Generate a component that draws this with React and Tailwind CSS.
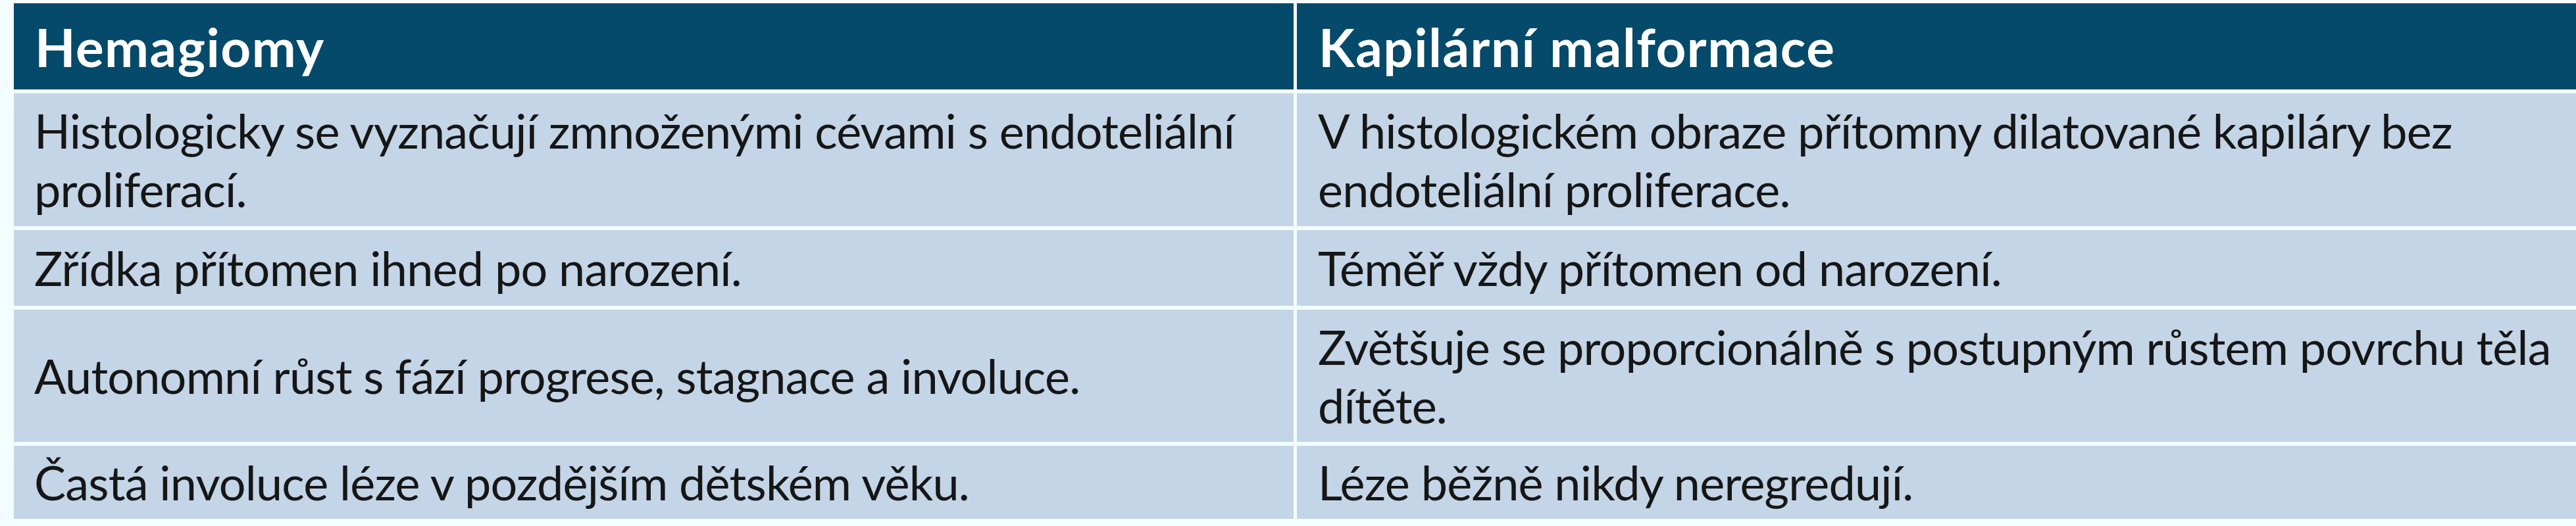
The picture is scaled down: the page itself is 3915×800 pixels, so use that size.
export default function App() {
    const rows = [
        {
            h: "h-[202px]",
            left: ["Histologicky se vyznačují zmnoženými cévami s endoteliální", "proliferací."],
            right: ["V histologickém obraze přítomny dilatované kapiláry bez", "endoteliální proliferace."],
        },
        {
            h: "h-[115px]",
            left: ["Zřídka přítomen ihned po narození."],
            right: ["Téměř vždy přítomen od narození."],
        },
        {
            h: "h-[201px]",
            left: ["Autonomní růst s fází progrese, stagnace a involuce."],
            right: ["Zvětšuje se proporcionálně s postupným růstem povrchu těla", "dítěte."],
        },
        {
            h: "h-[111px]",
            left: ["Častá involuce léze v pozdějším dětském věku."],
            right: ["Léze běžně nikdy neregredují."],
        },
    ];

    return (
        <main className="w-[3915px] h-[800px] bg-[#f3fcff] pt-[5px] pl-[21px] font-['Lato','Liberation_Sans',sans-serif]">
            <div className="grid grid-cols-[1945px_1944px] gap-x-[5px] gap-y-[6px]">
                <div className="h-[131px] bg-[#054a6a] flex items-center pl-[32px] text-white font-bold text-[80px] tracking-[1.5px]">
                    Hemagiomy
                </div>
                <div className="h-[131px] bg-[#054a6a] flex items-center pl-[33px] text-white font-bold text-[80px] tracking-[1.5px]">
                    Kapilární malformace
                </div>

                {rows.map((row, i) => (
                    <>
                        <div key={"l" + i} className={`${row.h} bg-[#c3d5e6] flex flex-col justify-center pl-[31px] text-[#161616] text-[72px] leading-[89px] tracking-[-0.8px] whitespace-nowrap`}>
                            {row.left.map((line) => (
                                <span key={line}>{line}</span>
                            ))}
                        </div>
                        <div key={"r" + i} className={`${row.h} bg-[#c3d5e6] flex flex-col justify-center pl-[32px] text-[#161616] text-[72px] leading-[89px] tracking-[-0.8px] whitespace-nowrap`}>
                            {row.right.map((line) => (
                                <span key={line}>{line}</span>
                            ))}
                        </div>
                    </>
                ))}
            </div>
        </main>
    );
}
